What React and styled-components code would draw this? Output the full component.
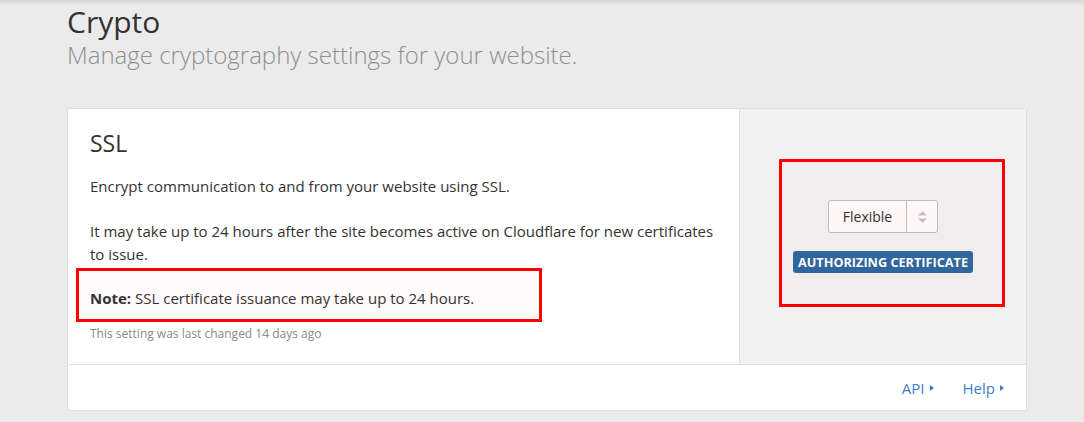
import React from "react"
import styled, { createGlobalStyle } from "styled-components"

const GlobalStyle = createGlobalStyle`
  body {
    margin: 0;
    background: linear-gradient(#d6d6d6 0, #ebebeb 6px) no-repeat, #ebebeb;
    font-family: "Open Sans", "Liberation Sans", sans-serif;
    color: #333;
  }
`

const App = () => (
  <>
    <GlobalStyle />
    <Page>
      <PageHeader>
        <Title>Crypto</Title>
        <Subtitle>Manage cryptography settings for your website.</Subtitle>
      </PageHeader>

      <Card>
        <CardBody>
          <Main>
            <CardTitle>SSL</CardTitle>
            <Text>Encrypt communication to and from your website using SSL.</Text>
            <Text>
              It may take up to 24 hours after the site becomes active on Cloudflare for new
              certificates to issue.
            </Text>
            <Note>
              <b>Note:</b> SSL certificate issuance may take up to 24 hours.
              <Frame $top={-20} $right={175} $bottom={-14} $left={-14} />
            </Note>
            <Meta>This setting was last changed 14 days ago</Meta>
          </Main>

          <Control>
            <Select>
              <SelectValue>Flexible</SelectValue>
              <SelectArrows>
                <svg width="9" height="12" viewBox="0 0 9 12">
                  <path d="M4.5 0 L9 4.5 H0 Z M0 7.5 H9 L4.5 12 Z" fill="#c4c4c4" />
                </svg>
              </SelectArrows>
            </Select>
            <Badge>Authorizing Certificate</Badge>
            <Frame $top={50} $right={21} $bottom={57} $left={39} />
          </Control>
        </CardBody>

        <CardFooter>
          <FooterLink href="#">API</FooterLink>
          <FooterLink href="#">Help</FooterLink>
        </CardFooter>
      </Card>
    </Page>
  </>
)

const Page = styled.div`
  padding: 0 57px 0 67px;
`

const PageHeader = styled.div`
  padding: 4px 0 0;
  margin-bottom: 38px;
`

const Title = styled.h1`
  margin: 0;
  font-size: 30px;
  font-weight: 400;
  line-height: 36px;
  color: #333;
`

const Subtitle = styled.p`
  margin: 0;
  font-size: 24px;
  font-weight: 300;
  line-height: 30px;
  color: #8f8f8f;
`

const Card = styled.div`
  width: 958px;
  background: #fff;
  border: 1px solid #dedede;
  border-radius: 3px;
`

const CardBody = styled.div`
  display: flex;
  border-bottom: 1px solid #dedede;
`

const Main = styled.div`
  width: 627px;
  padding: 18px 22px 22px;
  border-right: 1px solid #dedede;
`

const CardTitle = styled.h2`
  margin: 0 0 16px;
  font-size: 23px;
  font-weight: 400;
  line-height: 32px;
  color: #333;
`

const Text = styled.p`
  margin: 0 0 22px;
  font-size: 15px;
  line-height: 23px;
  color: #333;
`

const Note = styled.p`
  position: relative;
  margin: 0 0 18px;
  font-size: 15px;
  line-height: 20px;
  color: #333;

  b {
    font-weight: 700;
  }
`

const Meta = styled.div`
  font-size: 12px;
  line-height: 16px;
  color: #888;
`

const Frame = styled.span`
  position: absolute;
  top: ${(p) => p.$top}px;
  right: ${(p) => p.$right}px;
  bottom: ${(p) => p.$bottom}px;
  left: ${(p) => p.$left}px;
  border: 3px solid #f00;
  background: rgba(230, 0, 40, 0.02);
  pointer-events: none;
`

const Control = styled.div`
  position: relative;
  flex: 1;
  display: flex;
  flex-direction: column;
  align-items: center;
  justify-content: center;
  background: #f1f1f1;
`

const Select = styled.div`
  display: flex;
  height: 31px;
  border: 1px solid #bdbdbd;
  border-radius: 3px;
  background: #fdfcfc;
`

const SelectValue = styled.span`
  width: 77px;
  text-align: center;
  font-size: 14px;
  line-height: 31px;
  color: #333;
  border-right: 1px solid #bdbdbd;
`

const SelectArrows = styled.span`
  width: 30px;
  display: flex;
  align-items: center;
  justify-content: center;
`

const Badge = styled.span`
  margin-top: 18px;
  padding: 0 5px;
  height: 22px;
  line-height: 22px;
  background: #2b69a0;
  border-radius: 3px;
  color: #fff;
  font-size: 12.7px;
  font-weight: 700;
  text-transform: uppercase;
`

const CardFooter = styled.div`
  display: flex;
  justify-content: flex-end;
  gap: 29px;
  height: 45px;
  align-items: center;
  padding: 0 22px;
`

const FooterLink = styled.a`
  display: flex;
  align-items: center;
  gap: 5px;
  font-size: 15px;
  color: #3a7fca;
  text-decoration: none;

  &::after {
    content: "";
    border-left: 4px solid #3a7fca;
    border-top: 3.5px solid transparent;
    border-bottom: 3.5px solid transparent;
  }
`

export default App
